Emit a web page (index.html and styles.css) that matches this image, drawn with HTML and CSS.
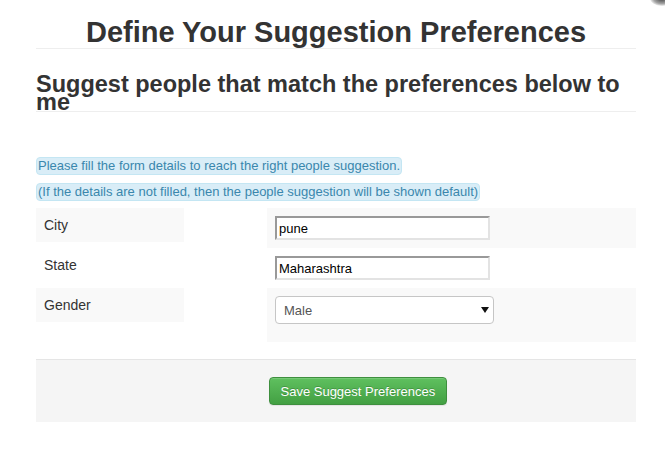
FILE: index.html
```html
<!DOCTYPE html>
<html>
<head>
<meta charset="utf-8">
<link rel="stylesheet" href="styles.css">
</head>
<body>
<div class="corner-shadow"></div>
<div class="page">
  <h1 class="title">Define Your Suggestion Preferences</h1>
  <h2 class="subtitle">Suggest people that match the preferences below to me</h2>
  <div class="notes">
    <div class="note-line first"><span class="note">Please fill the form details to reach the right people suggestion.</span></div>
    <div class="note-line"><span class="note">(If the details are not filled, then the people suggestion will be shown default)</span></div>
  </div>
  <div class="form">
    <div class="row striped">
      <div class="label">City</div>
      <div class="spacer"></div>
      <div class="field"><input class="text-input" type="text" value="pune"></div>
    </div>
    <div class="row">
      <div class="label">State</div>
      <div class="spacer"></div>
      <div class="field"><input class="text-input" type="text" value="Maharashtra"></div>
    </div>
    <div class="row striped">
      <div class="label">Gender</div>
      <div class="spacer"></div>
      <div class="field field-select">
        <div class="select-wrap">
          <select class="select"><option>Male</option><option>Female</option></select>
          <svg class="select-arrow" width="8" height="6" viewBox="0 0 8 6"><path d="M0 0H8L4 6Z" fill="#111"/></svg>
        </div>
      </div>
    </div>
  </div>
  <div class="footer">
    <button class="btn-save" type="button">Save Suggest Preferences</button>
  </div>
</div>
</body>
</html>
```

FILE: styles.css
```css
html, body {
  margin: 0;
  padding: 0;
  background: #fff;
}
body {
  font-family: "Liberation Sans", Arial, sans-serif;
  color: #333;
  font-size: 14px;
}
.corner-shadow {
  position: absolute;
  top: -9px;
  right: -9px;
  width: 24px;
  height: 15px;
  border-radius: 50%;
  background: radial-gradient(ellipse at center, rgba(0,0,0,0.75) 0%, rgba(0,0,0,0.35) 50%, rgba(0,0,0,0) 75%);
}
.page {
  width: 600px;
  margin-left: 36px;
}
.title {
  margin: 17px 0 0;
  font-size: 29px;
  line-height: 31px;
  font-weight: bold;
  text-align: center;
  color: #333;
  border-bottom: 1px solid #eee;
}
.subtitle {
  margin: 26px 0 0;
  font-size: 23.5px;
  line-height: 18px;
  font-weight: bold;
  color: #333;
  padding-bottom: 0;
  border-bottom: 1px solid #eee;
}
.notes {
  margin-top: 45px;
}
.note-line {
  height: 17px;
  margin-bottom: 8px;
}
.note-line.first {
  margin-bottom: 9px;
}
.note {
  display: inline-block;
  background: #d9edf7;
  border: 1px solid #c4e6f3;
  border-radius: 4px;
  color: #3a87ad;
  font-size: 13px;
  line-height: 16px;
  padding: 0 1px;
}
.row {
  display: flex;
  align-items: flex-start;
}
.label {
  width: 148px;
  box-sizing: border-box;
  padding: 8px;
  line-height: 18px;
  font-size: 14px;
  color: #333;
}
.spacer {
  width: 83px;
}
.field {
  flex: 1;
  padding: 8px;
}
.row.striped .label,
.row.striped .field {
  background: #f9f9f9;
}
.text-input {
  display: block;
  box-sizing: border-box;
  width: 215px;
  height: 24px;
  margin: 0;
  padding: 1px 2px;
  font-family: "Liberation Sans", Arial, sans-serif;
  font-size: 13px;
  color: #000;
  background: #fff;
  border-style: solid;
  border-width: 2px;
  border-color: #999 #e3e3e3 #e3e3e3 #999;
  outline: none;
}
.field-select {
  padding-bottom: 18px;
}
.select-wrap {
  position: relative;
  width: 219px;
}
.select {
  display: block;
  box-sizing: border-box;
  width: 219px;
  height: 28px;
  margin: 0;
  padding: 0 8px;
  font-family: "Liberation Sans", Arial, sans-serif;
  font-size: 13px;
  color: #555;
  background: #fff;
  border: 1px solid #c6c6c6;
  border-radius: 4px;
  -webkit-appearance: none;
  appearance: none;
}
.select-arrow {
  position: absolute;
  right: 5px;
  top: 11px;
}
.footer {
  margin-top: 17px;
  border-top: 1px solid #e5e5e5;
  background: #f5f5f5;
  height: 63px;
  box-sizing: border-box;
  padding: 17px 0 0 233px;
}
.btn-save {
  display: block;
  box-sizing: border-box;
  height: 28px;
  padding: 0 10.5px;
  white-space: nowrap;
  font-family: "Liberation Sans", Arial, sans-serif;
  font-size: 13px;
  color: #fff;
  text-shadow: 0 -1px 0 rgba(0,0,0,0.2);
  background-image: linear-gradient(to bottom, #5fc05f 0%, #43a043 100%);
  border: 1px solid #3e8f3e;
  border-radius: 4px;
  box-shadow: inset 0 1px 0 rgba(255,255,255,0.15), 0 1px 1px rgba(0,0,0,0.075);
}
```
